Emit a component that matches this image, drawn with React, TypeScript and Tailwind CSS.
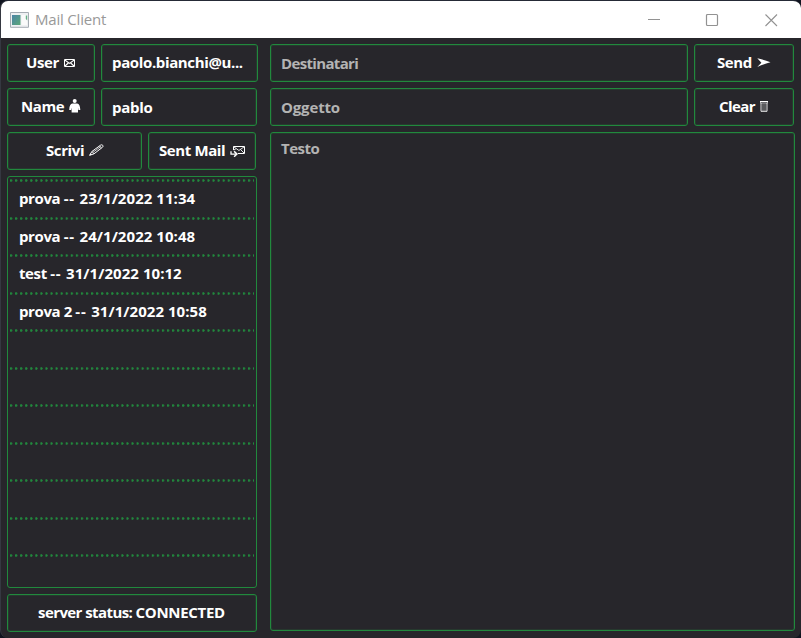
import React from "react";

const box = "border border-[#21893d] rounded-[3px] flex items-center shrink-0 whitespace-nowrap outline outline-1 -outline-offset-2 outline-[#21893d]/20";

const mails = [
  { subject: "prova", date: "23/1/2022 11:34", cls: "h-[38px]" },
  { subject: "prova", date: "24/1/2022 10:48", cls: "h-[37px]" },
  { subject: "test", date: "31/1/2022 10:12", cls: "h-[38px]" },
  { subject: "prova 2", date: "31/1/2022 10:58", cls: "h-[37px]" },
  { subject: "", date: "", cls: "h-[38px]" },
  { subject: "", date: "", cls: "h-[37px]" },
  { subject: "", date: "", cls: "h-[38px]" },
  { subject: "", date: "", cls: "h-[37px]" },
  { subject: "", date: "", cls: "h-[38px]" },
  { subject: "", date: "", cls: "h-[37px]" },
  { subject: "", date: "", cls: "h-[31px]" },
];

function Envelope() {
  return (
    <svg className="ml-[5px] mt-px" width="11" height="8" viewBox="0 0 11 8" fill="none" stroke="white">
      <path d="M.5.5h10v7H.5z" strokeWidth="1" />
      <path d="M.8 1l4.7 3.4L10.2 1M1 7l3.3-3M10 7L6.7 4" strokeWidth="1.1" />
    </svg>
  );
}

function Person() {
  return (
    <svg className="ml-[5px] -mt-px" width="12" height="14" viewBox="0 0 12 14" fill="white">
      <circle cx="5.7" cy="2.1" r="2" />
      <path d="M3.3 4.6h4.9c1.8 0 3 2.2 3.1 6.4H9.4L9 8.5v5H2.6v-5l-.5 2.5H.2c.1-4.2 1.3-6.4 3.1-6.4z" />
    </svg>
  );
}

function Pencil() {
  return (
    <svg className="ml-[5px]" width="15" height="12" viewBox="0 0 15 12" fill="none" stroke="white">
      <path d="M.6 11.3l2.3-3.8 8.2-6c1-.9 1.9-.9 2.6-.2.6.8.4 1.5-.5 2.2l-8.2 6.3z" strokeWidth="1" />
      <path d="M3.8 8.5l7.7-5.7" strokeWidth="1" opacity=".75" />
      <path d="M2.9 7.5l2 2.3M10.6 1.8l1.8 2.2" strokeWidth=".8" />
      <path d="M.4 11.5l1.3-2 1 1.2z" fill="white" stroke="none" />
    </svg>
  );
}

function SentEnvelope() {
  return (
    <svg className="ml-[5px] mt-[2px]" width="15" height="12" viewBox="0 0 15 12" fill="none" stroke="white">
      <path d="M3.5 5V1.5h11v7H8" strokeWidth="1" />
      <path d="M3.8 1.8l5.1 3.7 5.3-3.7M10.6 4.6l3.4 3.4M3.8 5l2-1" strokeWidth=".9" />
      <path d="M1 6.3v2.8h5" strokeWidth="1.3" />
      <path d="M4.1 6.3l2.8 2.8-2.8 2.6" strokeWidth="1.5" />
    </svg>
  );
}

function Arrow() {
  return (
    <svg className="ml-[5px]" width="14" height="9" viewBox="0 0 14 9" fill="white">
      <path d="M.3.2c4 .9 8.8 2.4 13.2 4.1C9 5.5 4.3 7 .3 8.9L4.4 4.8z" />
    </svg>
  );
}

function Bin() {
  return (
    <svg className="ml-[5px]" width="8" height="12" viewBox="0 0 8 12" fill="none" stroke="white">
      <path d="M0 1.5h8" strokeWidth="1" />
      <path d="M.4 1v2h7.2V1" strokeWidth=".8" opacity=".8" />
      <path d="M1 3v8.3h6V3" strokeWidth="1" opacity=".9" />
      <path d="M3 3.5V11M5 3.5V11" strokeWidth=".8" opacity=".6" />
    </svg>
  );
}

function DotLine() {
  return (
    <div className="h-[3px] w-full shrink-0 bg-[radial-gradient(circle_at_1px_1.5px,#21893d_0.9px,transparent_1.6px)] bg-[length:5.07px_3px] bg-repeat-x" />
  );
}

export default function App() {
  return (
    <div className="h-[638px] w-[801px] overflow-hidden bg-[#10141f] font-['Open_Sans','Noto_Sans',sans-serif]">
      <div className="flex h-[638px] w-[801px] flex-col overflow-hidden rounded-[8px] border-l border-t border-l-[#353841] border-t-[#252a36] bg-[#27262b]">
        <header className="flex h-[37px] shrink-0 items-center bg-white pl-[9px] text-[#999]">
          <svg width="19" height="16" viewBox="0 0 19 16">
            <defs>
              <linearGradient id="screen" x1="0" y1="0" x2="1" y2="1">
                <stop offset="0" stopColor="#4b84a6" />
                <stop offset="1" stopColor="#5ca878" />
              </linearGradient>
            </defs>
            <path d="M.5.5h18v14.8H.5z" fill="#eef0f2" stroke="#a5acb3" />
            <path d="M2 3h8.5v10H2z" fill="url(#screen)" />
            <path d="M11.5 3h5.5v10h-5.5z" fill="#fafafa" />
            <path d="M15.8 3.5h1.4v5l-1.4-1.5z" fill="#65ae86" />
          </svg>
          <span className="ml-[6px] text-[15px] tracking-[-0.2px]">Mail Client</span>
          <svg className="ml-auto mr-[22px]" width="132" height="14" viewBox="0 0 132 14" fill="none" stroke="#929292">
            <path d="M1 6.5h12" />
            <rect x="59.5" y="1.5" width="11" height="11" rx="1" strokeWidth="1.2" />
            <path d="M118.5 1.5l11.5 11.5M130 1.5L118.5 13" strokeWidth="1.1" />
          </svg>
        </header>

        <main className="flex gap-[12px] pl-[6px] pt-[6px] text-[15px] font-bold leading-5 text-white">
          <aside className="flex w-[251px] flex-col gap-[6px]">
            <div className="flex gap-[6px]">
              <div className={`${box} h-[38px] w-[88px] pl-[18px] pb-[2px]`}><span className="tracking-[-0.4px]">User</span><Envelope /></div>
              <div className={`${box} h-[38px] w-[157px] pl-[10px] pb-[2px]`}><span className="tracking-[-0.36px]">paolo.bianchi@u...</span></div>
            </div>
            <div className="flex gap-[6px]">
              <div className={`${box} h-[38px] w-[88px] pl-[13px] pb-[2px]`}><span className="tracking-[-0.4px]">Name</span><Person /></div>
              <div className={`${box} h-[38px] w-[156px] pl-[10px]`}><span className="tracking-[-0.3px]">pablo</span></div>
            </div>
            <div className="flex gap-[6px]">
              <div className={`${box} h-[38px] w-[135px] pl-[38px] pb-[2px]`}><span className="tracking-[-0.4px]">Scrivi</span><Pencil /></div>
              <div className={`${box} h-[38px] w-[108px] pl-[10px] pb-[2px]`}><span className="tracking-[-0.4px]">Sent Mail</span><SentEnvelope /></div>
            </div>
            <div className="h-[412px] w-[250px] overflow-hidden rounded-[3px] border border-[#21893d] px-[2px] pt-[2px]">
              {mails.map((mail, i) => (
                <div key={i} className={`${mail.cls} flex flex-col`}>
                  <DotLine />
                  {mail.subject && (
                    <div className="whitespace-pre pl-[9px] pt-[6px]">
                      <span className="tracking-[-0.4px]">{mail.subject} </span>
                      <span className="tracking-[0.75px]">-- </span>
                      <span className="tracking-[0.05px]">{mail.date}</span>
                    </div>
                  )}
                </div>
              ))}
            </div>
            <div className={`${box} h-[38px] w-[250px] pl-[30px] pb-[2px]`}>
              <span className="whitespace-pre tracking-[-0.58px]">server status: </span>
              <span className="tracking-[-0.3px]">CONNECTED</span>
            </div>
          </aside>

          <section className="flex w-[525px] flex-col gap-[6px] text-[#b3b3b3]">
            <div className="flex gap-[6px]">
              <div className={`${box} h-[38px] w-[418px] pl-[10px]`}><span className="tracking-[-0.66px]">Destinatari</span></div>
              <div className={`${box} h-[38px] w-[100px] pl-[22px] pb-[2px] text-white`}><span className="tracking-[-0.4px]">Send</span><Arrow /></div>
            </div>
            <div className="flex gap-[6px]">
              <div className={`${box} h-[38px] w-[418px] pl-[10px]`}><span className="tracking-[-0.15px]">Oggetto</span></div>
              <div className={`${box} h-[38px] w-[100px] pl-[24px] pb-[2px] text-white`}><span className="tracking-[-0.55px]">Clear</span><Bin /></div>
            </div>
            <div className="h-[499px] w-[525px] rounded-[3px] border border-[#21893d] pl-[10px] pt-[5px] outline outline-1 -outline-offset-2 outline-[#21893d]/20"><span className="tracking-[-0.5px]">Testo</span></div>
          </section>
        </main>
      </div>
    </div>
  );
}
